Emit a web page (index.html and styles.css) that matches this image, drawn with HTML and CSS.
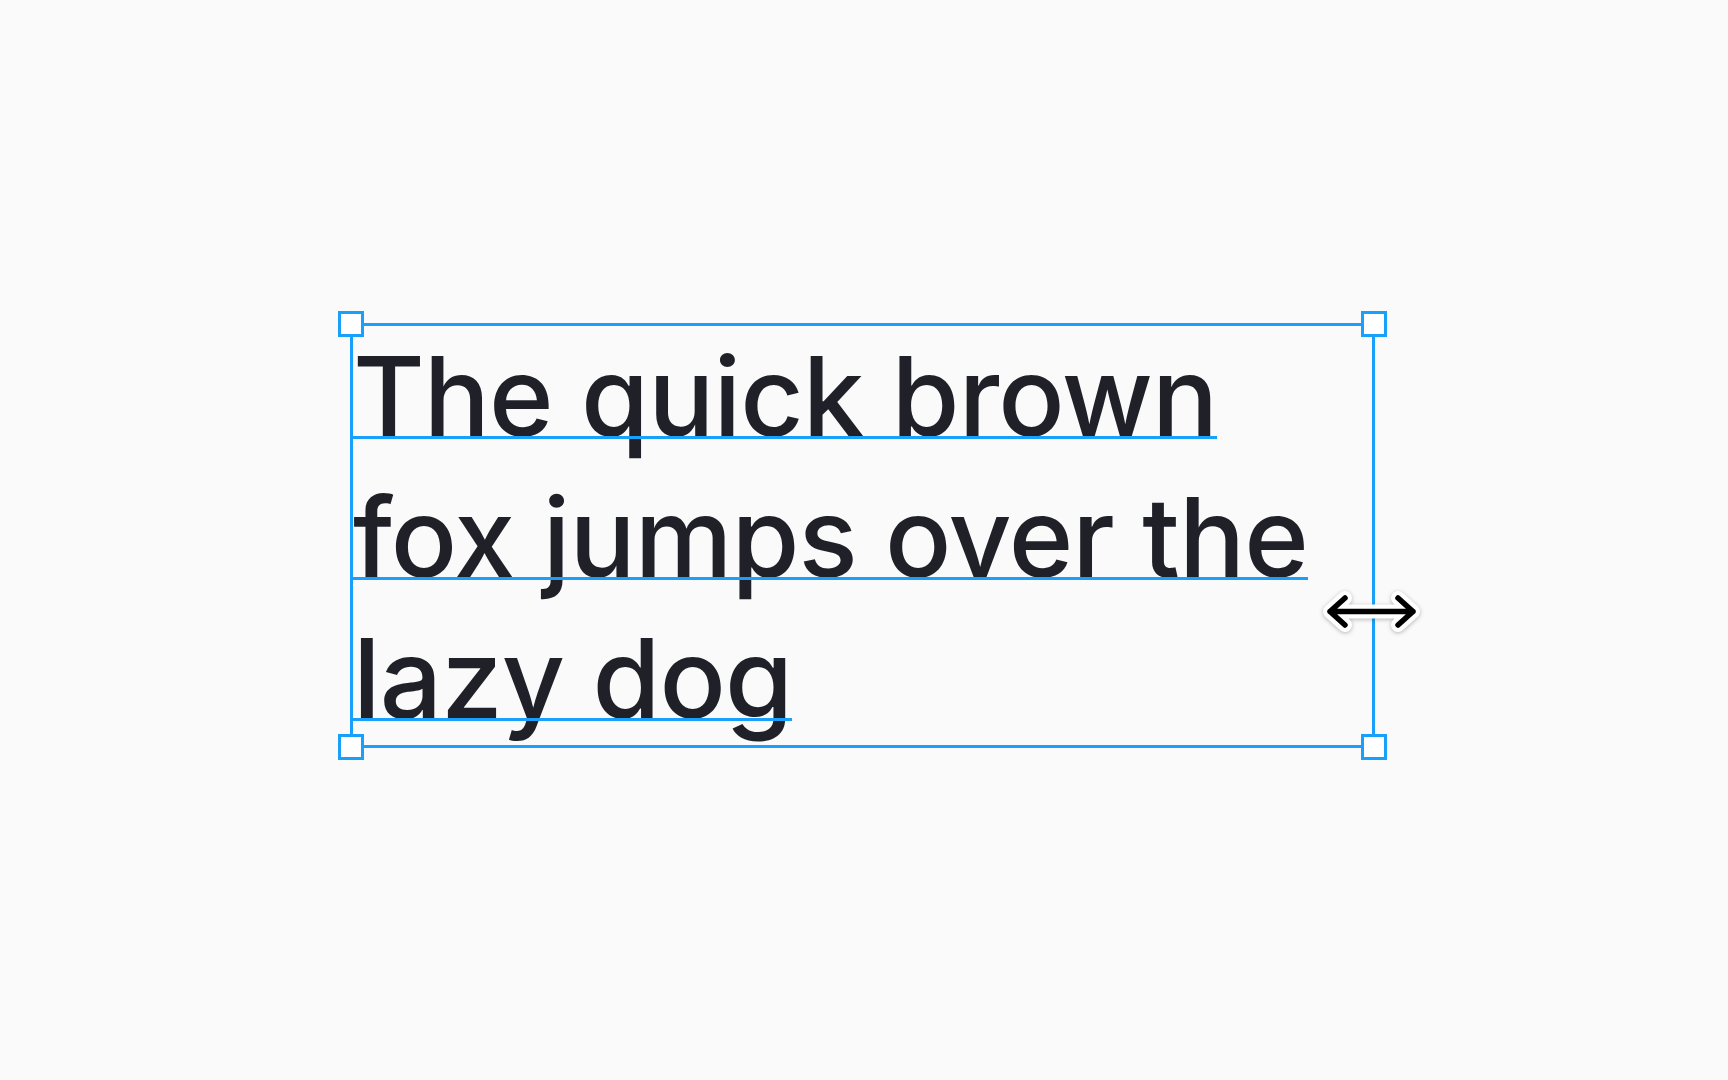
FILE: index.html
```html
<!DOCTYPE html>
<html lang="en">
<head>
<meta charset="utf-8">
<title>Text box</title>
<link rel="stylesheet" href="styles.css">
</head>
<body>
<main class="canvas">
  <div class="textbox">
    <div class="line">The quick brown</div>
    <div class="line">fox jumps over the</div>
    <div class="line">lazy dog</div>
    <span class="handle tl"></span>
    <span class="handle tr"></span>
    <span class="handle bl"></span>
    <span class="handle br"></span>
    <svg class="cursor" width="114" height="44" viewBox="0 0 114 44" aria-hidden="true">
      <path d="M15 21.5 H98 M30 8 L15 21.5 L30 35 M83 8 L98 21.5 L83 35" fill="none" stroke="#ffffff" stroke-width="14" stroke-linecap="round" stroke-linejoin="round"/>
      <path d="M15 21.5 H98 M30 8 L15 21.5 L30 35 M83 8 L98 21.5 L83 35" fill="none" stroke="#000000" stroke-width="5.5" stroke-linecap="round" stroke-linejoin="round"/>
    </svg>
  </div>
</main>
</body>
</html>
```
FILE: styles.css
```css
html, body {
  margin: 0;
  padding: 0;
  background: #fafafa;
}

.canvas {
  padding: 323px 0 0 350px;
  height: 1080px;
  box-sizing: border-box;
}

.textbox {
  position: relative;
  width: 1019px;
  height: 419px;
  border: 3px solid #19a0fb;
  font-family: Inter, "Noto Sans", sans-serif;
  font-size: 110px;
  font-weight: 500;
  letter-spacing: -0.95px;
  line-height: 141px;
  color: #1f2028;
}

.line {
  position: relative;
  width: fit-content;
  white-space: nowrap;
}

.line::after {
  content: "";
  position: absolute;
  left: 0;
  right: 0;
  top: 110px;
  height: 3px;
  background: #19a0fb;
}

.handle {
  position: absolute;
  width: 26px;
  height: 26px;
  box-sizing: border-box;
  border: 3px solid #19a0fb;
  background: #ffffff;
}

.handle.tl { left: -15px; top: -15px; }
.handle.tr { right: -15px; top: -15px; }
.handle.bl { left: -15px; bottom: -15px; }
.handle.br { right: -15px; bottom: -15px; }

.cursor {
  position: absolute;
  left: 962px;
  top: 264px;
  filter: drop-shadow(0 1.5px 2px rgba(0, 0, 0, 0.28));
}
```
